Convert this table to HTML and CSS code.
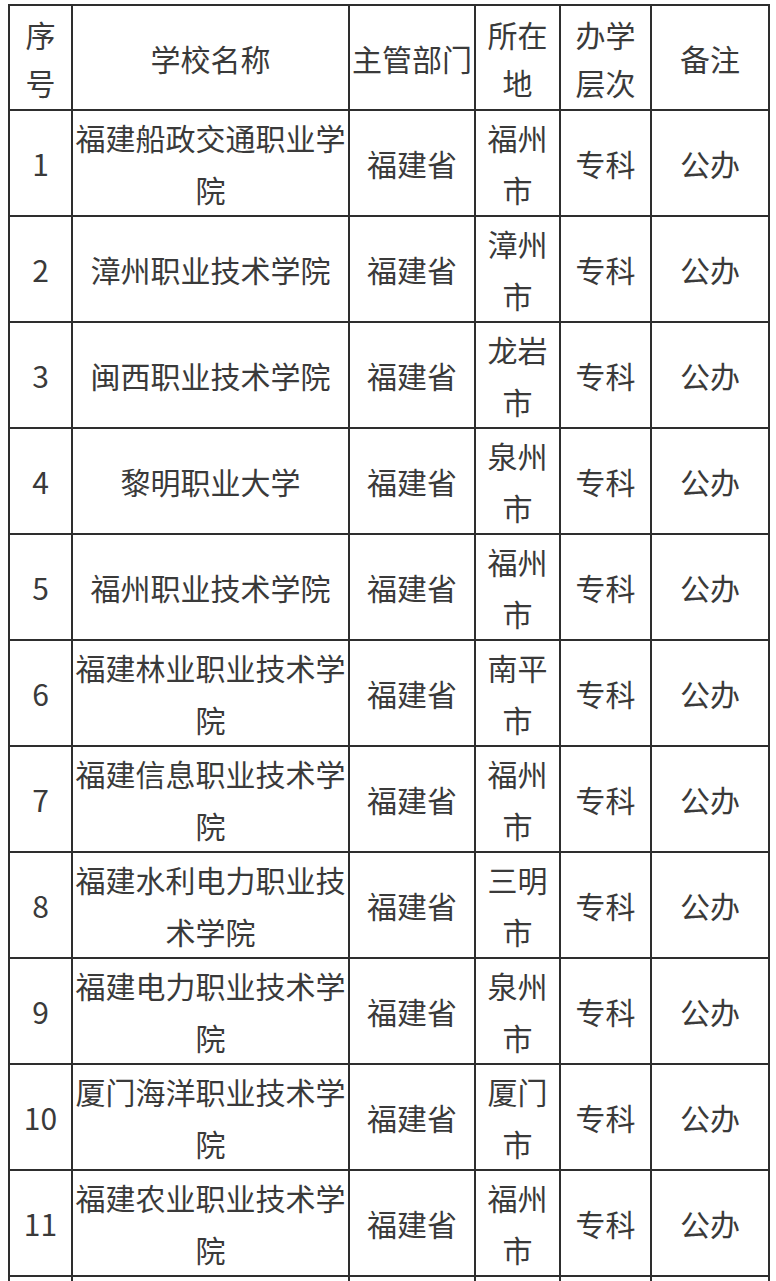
FILE: index.html
```html
<!DOCTYPE html>
<html lang="zh-CN">
<head>
<meta charset="utf-8">
<title>福建高职院校名单</title>
<link rel="stylesheet" href="styles.css">
</head>
<body>
<table class="schools">
  <colgroup>
    <col class="c-no">
    <col class="c-name">
    <col class="c-dept">
    <col class="c-loc">
    <col class="c-level">
    <col class="c-note">
  </colgroup>
  <thead>
    <tr class="head">
      <th>序<br>号</th>
      <th>学校名称</th>
      <th>主管部门</th>
      <th>所在<br>地</th>
      <th>办学<br>层次</th>
      <th>备注</th>
    </tr>
  </thead>
  <tbody>
    <tr><td>1</td><td>福建船政交通职业学院</td><td>福建省</td><td>福州市</td><td>专科</td><td>公办</td></tr>
    <tr><td>2</td><td>漳州职业技术学院</td><td>福建省</td><td>漳州市</td><td>专科</td><td>公办</td></tr>
    <tr><td>3</td><td>闽西职业技术学院</td><td>福建省</td><td>龙岩市</td><td>专科</td><td>公办</td></tr>
    <tr><td>4</td><td>黎明职业大学</td><td>福建省</td><td>泉州市</td><td>专科</td><td>公办</td></tr>
    <tr><td>5</td><td>福州职业技术学院</td><td>福建省</td><td>福州市</td><td>专科</td><td>公办</td></tr>
    <tr><td>6</td><td>福建林业职业技术学院</td><td>福建省</td><td>南平市</td><td>专科</td><td>公办</td></tr>
    <tr><td>7</td><td>福建信息职业技术学院</td><td>福建省</td><td>福州市</td><td>专科</td><td>公办</td></tr>
    <tr><td>8</td><td>福建水利电力职业技术学院</td><td>福建省</td><td>三明市</td><td>专科</td><td>公办</td></tr>
    <tr><td>9</td><td>福建电力职业技术学院</td><td>福建省</td><td>泉州市</td><td>专科</td><td>公办</td></tr>
    <tr><td>10</td><td>厦门海洋职业技术学院</td><td>福建省</td><td>厦门市</td><td>专科</td><td>公办</td></tr>
    <tr><td>11</td><td>福建农业职业技术学院</td><td>福建省</td><td>福州市</td><td>专科</td><td>公办</td></tr>
    <tr><td>12</td><td>福建卫生职业技术学院</td><td>福建省</td><td>福州市</td><td>专科</td><td>公办</td></tr>
  </tbody>
</table>
</body>
</html>
```

FILE: styles.css
```css
html, body {
  background: #ffffff;
}

body {
  margin: 4px 0 0 8px;
  font-family: "Noto Sans CJK SC", "Noto Sans", sans-serif;
  color: #3a3a3a;
}

.schools {
  table-layout: fixed;
  border-collapse: separate;
  border-spacing: 0;
  width: 762px;
  border-top: 2px solid #2e2e2e;
  border-left: 2px solid #2e2e2e;
}

.c-no { width: 63px; }
.c-name { width: 277px; }
.c-dept { width: 126px; }
.c-loc { width: 85px; }
.c-level { width: 91px; }
.c-note { width: 118px; }

.schools th,
.schools td {
  border-right: 2px solid #2e2e2e;
  border-bottom: 2px solid #2e2e2e;
  padding: 0;
  text-align: center;
  vertical-align: middle;
  font-size: 30px;
  font-weight: 400;
  overflow: hidden;
}

.schools th {
  height: 103px;
  line-height: 48px;
}

.schools td {
  height: 104px;
  line-height: 52px;
}
```
